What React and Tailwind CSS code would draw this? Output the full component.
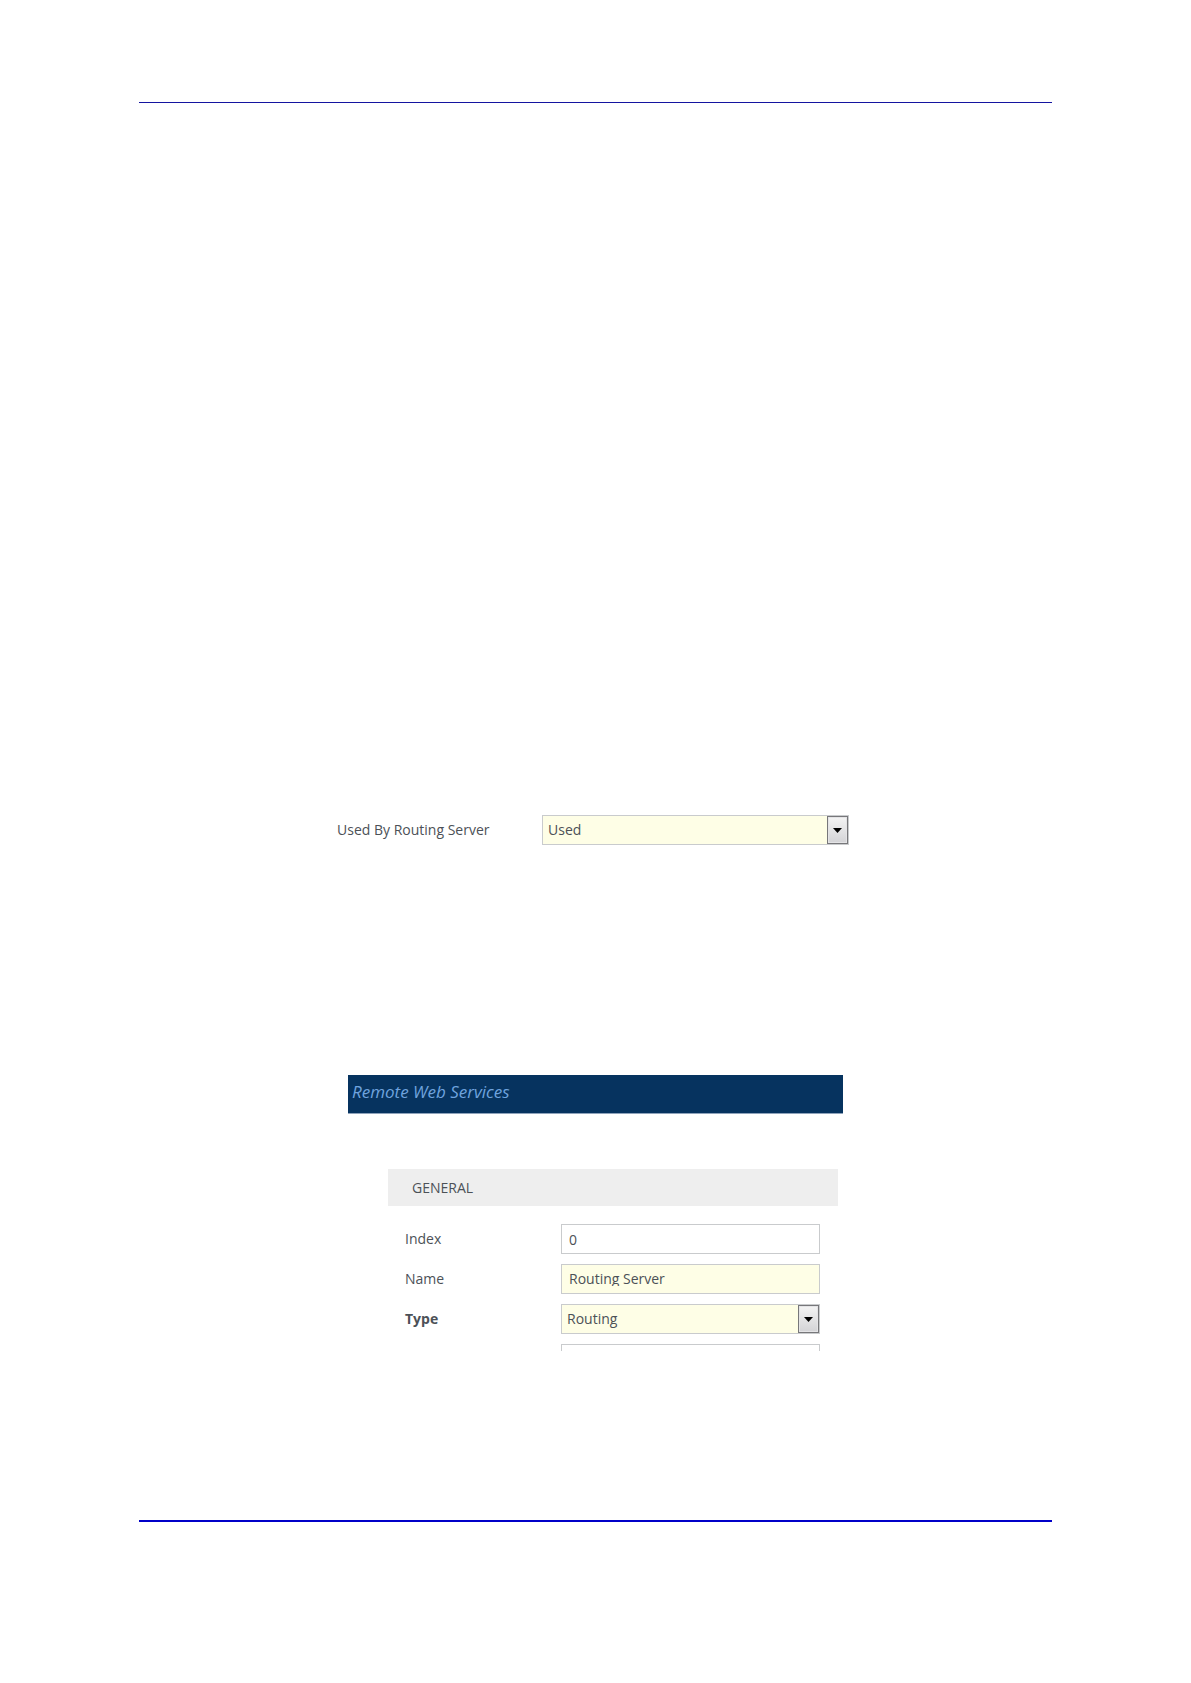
const fieldBox = "h-[30px] w-full border border-[#c9cbcd] text-[#4c5157]";

function DropDown({ id, value, options }) {
  return (
    <div className="relative min-w-0 flex-1">
      <select
        id={id}
        defaultValue={value}
        className={`${fieldBox} block appearance-none rounded-none bg-[#fefee6] pl-[5px] pr-6 outline-none`}
      >
        {options.map((o) => (
          <option key={o}>{o}</option>
        ))}
      </select>
      <span className="pointer-events-none absolute inset-y-px right-px flex w-[21px] items-center justify-center border border-[#77777a] bg-linear-to-b from-[#f4f4f4] to-[#d3d3d6] ring-1 ring-inset ring-[#e4e4e6]">
        <svg viewBox="0 0 9 5" className="h-[5px] w-[9px]" fill="#000" aria-hidden="true">
          <path d="M0 0h9L4.5 5z" />
        </svg>
      </span>
    </div>
  );
}

function Field({ id, label, bold, children }) {
  return (
    <div className="flex items-center">
      <label htmlFor={id} className={bold ? "w-[156px] shrink-0 font-bold" : "w-[156px] shrink-0"}>
        {label}
      </label>
      {children}
    </div>
  );
}

export default function App() {
  return (
    <main className="flex min-h-screen flex-col bg-white px-[139px] pt-[102px] font-['Open_Sans',sans-serif] text-[14px] leading-5 text-[#4c5157]">
      <hr className="border-t border-[#1414a0]" />

      <section className="mx-auto mt-[712px] flex w-full max-w-[517px] items-center pr-[5px]">
        <label htmlFor="used-by" className="w-[205px] shrink-0">
          Used By Routing Server
        </label>
        <DropDown id="used-by" value="Used" options={["Used", "Not Used"]} />
      </section>

      <section className="mx-auto mt-[230px] w-full max-w-[495px]">
        <h1 className="h-[39px] border-b border-[#8fa3bb] bg-[#06335f] px-1 pt-[7px] text-[17px] leading-5 italic text-[#6fa3de]">
          Remote Web Services
        </h1>
        <div className="ml-10 mr-[5px] mt-[55px]">
          <h2 className="bg-[#eeeeee] px-6 py-[9px] leading-[19px]">GENERAL</h2>
          <form className="mt-[18px] flex flex-col gap-[10px] pl-[17px] pr-[18px]">
            <Field id="index" label="Index">
              <input id="index" defaultValue="0" className={`${fieldBox} min-w-0 flex-1 bg-white px-[7px] outline-none`} />
            </Field>
            <Field id="name" label="Name">
              <div className={`${fieldBox} min-w-0 flex-1 bg-[#fefee6]`}>
                <input
                  id="name"
                  defaultValue="Routing Server"
                  className="block h-[21px] w-full overflow-hidden px-[7px] pt-[5px] leading-5 outline-none"
                />
              </div>
            </Field>
            <Field id="type" label="Type" bold>
              <DropDown id="type" value="Routing" options={["Routing", "Call Status", "Topology Status"]} />
            </Field>
            <div className="ml-[156px] h-[7px] border border-b-0 border-[#c9cbcd]" />
          </form>
        </div>
      </section>

      <hr className="mt-[169px] border-t-2 border-[#0000c8]" />
    </main>
  );
}
